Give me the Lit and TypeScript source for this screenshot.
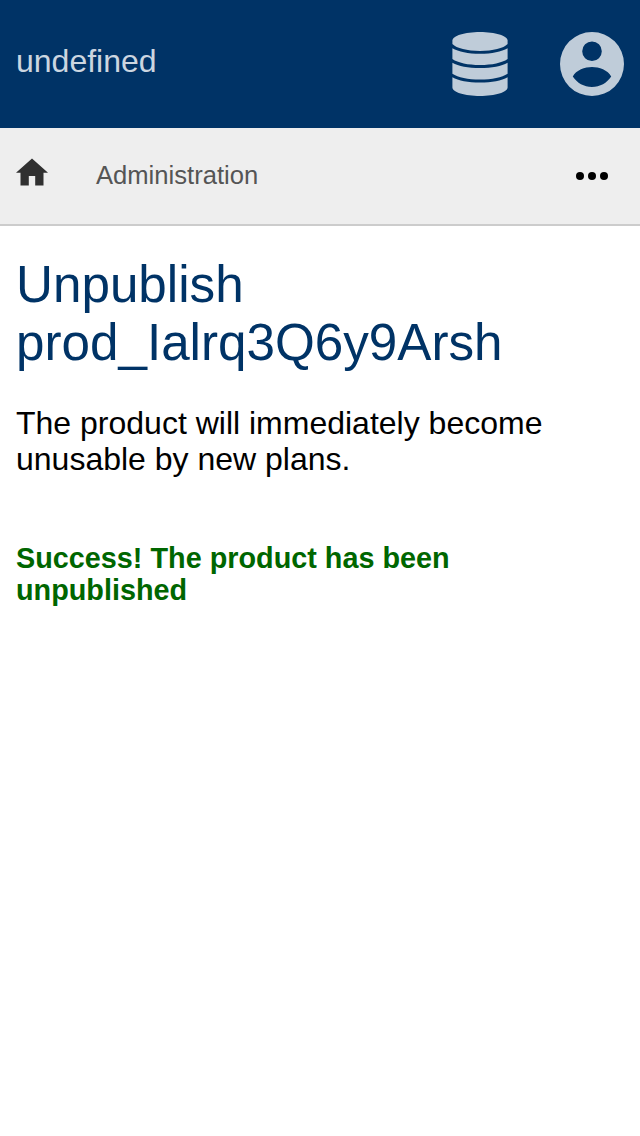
import { LitElement, html, css } from "lit";
import { customElement } from "lit/decorators.js";

@customElement("app-root")
class AppRoot extends LitElement {
  static styles = css`
    :host {
      display: block;
      min-height: 100vh;
      background: #fff;
      color: #000;
      font-family: "Liberation Sans", Arial, sans-serif;
    }
    svg { display: block; }
    h1, h2, p { margin: 0; font-weight: normal; }
    .header {
      box-sizing: border-box;
      height: 128px;
      padding: 0 16px;
      display: flex;
      align-items: center;
      background: #003366;
      color: #ccd6e0;
    }
    .title { flex: 1; font-size: 32px; line-height: 36px; padding-bottom: 6px; }
    .icons { display: flex; align-items: center; gap: 52px; fill: #bfccd9; }
    .nav {
      box-sizing: border-box;
      height: 98px;
      padding: 0 32px 2px 16px;
      display: flex;
      align-items: center;
      background: #eee;
      border-bottom: 2px solid #ccc;
    }
    .home { padding-bottom: 6px; fill: #303030; }
    .more { margin-top: 2px; }
    .crumb { flex: 1; margin-left: 48px; font-size: 25.6px; line-height: 30px; color: #555; }
    .main { padding: 30px 16px 0; }
    .heading { font-size: 51.2px; line-height: 58px; color: #003366; }
    .text { margin-top: 33px; font-size: 32px; line-height: 36px; }
    .success { margin-top: 65px; font-size: 28.8px; line-height: 32px; font-weight: bold; color: #006600; }
  `;

  render() {
    return html`
      <header class="header">
        <h2 class="title">undefined</h2>
        <div class="icons">
          <svg width="56" height="64" viewBox="0 0 56 64">
            <path d="M28 0C43 0 55.6 3.800 55.600 8.500V12C51.500 16.300 41 18.900 28 18.900S4.500 16.300 .4 12V8.500C.4 3.800 13 0 28 0z"></path>
            <path d="M.4 16.200C6.500 19.700 16 21.800 28 21.800S49.500 19.700 55.600 16.200V27.100C50 31 40 33.100 28 33.100S6 31 .4 27.100z"></path>
            <path d="M.4 30.700C6.500 34.200 16 36 28 36S49.500 34.200 55.600 30.700V41.700C50 45.600 40 47.500 28 47.500S6 45.600 .4 41.700z"></path>
            <path d="M.4 45.200C6.500 48.700 16 50.500 28 50.500S49.500 48.700 55.600 45.200V55.500C55.600 60.200 43 64 28 64S.4 60.200 .4 55.500z"></path>
          </svg>
          <svg width="64" height="64" viewBox="0 0 64 64">
            <path fill-rule="evenodd" d="M32 0a32 32 0 1 0 0 64a32 32 0 0 0 0-64zm0 9.400a9.800 9.800 0 1 1 0 19.600a9.800 9.800 0 0 1 0-19.600zM12.800 44.500C16 38 25 35 32 35S48 38 51.200 44.500C47 51 40 54.900 32 54.900S17 51 12.800 44.500z"></path>
          </svg>
        </div>
      </header>
      <nav class="nav">
        <svg class="home" width="32" height="28" viewBox="0 0 32 28">
          <path d="M16 .4L0 14.700H4.500V27.600H12.800V17.900H19.200V27.600H27.500V14.700H32z"></path>
        </svg>
        <span class="crumb">Administration</span>
        <svg class="more" width="32" height="8" viewBox="0 0 32 8">
          <circle cx="4" cy="4" r="4"></circle><circle cx="16" cy="4" r="4"></circle><circle cx="28" cy="4" r="4"></circle>
        </svg>
      </nav>
      <main class="main">
        <h1 class="heading">Unpublish prod_Ialrq3Q6y9Arsh</h1>
        <p class="text">The product will immediately become unusable by new plans.</p>
        <p class="success">Success! The product has been unpublished</p>
      </main>
    `;
  }
}
